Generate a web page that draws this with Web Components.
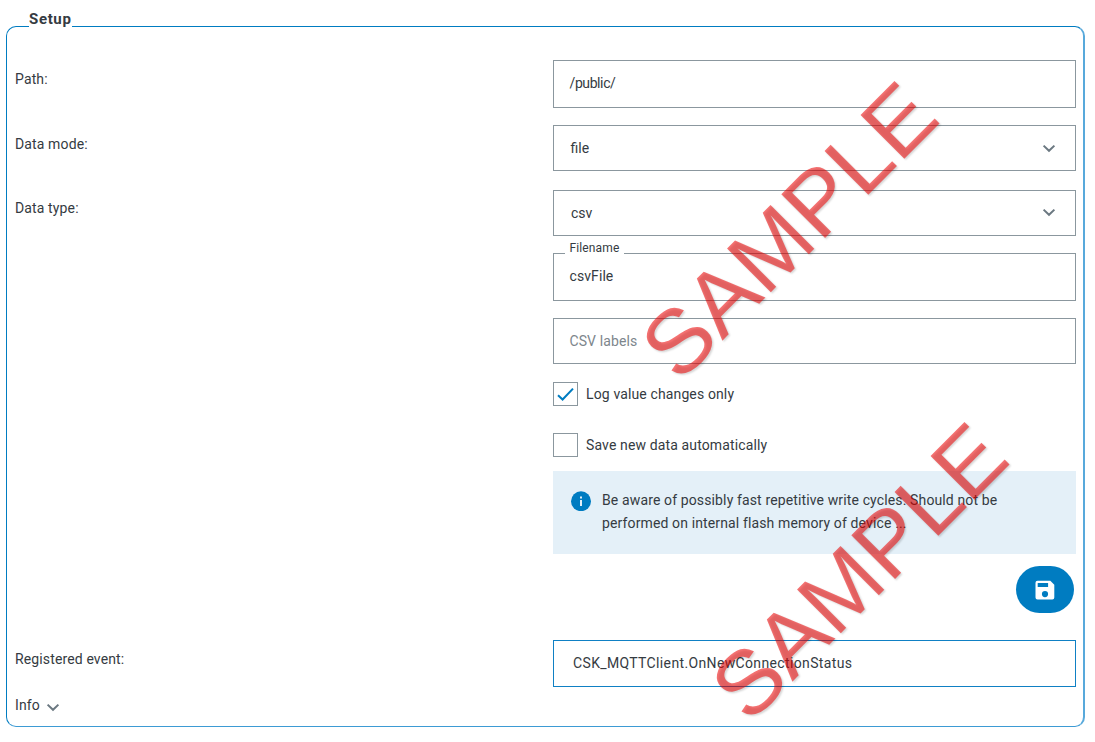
<!DOCTYPE html>
<html lang="en">
<head>
<meta charset="utf-8">
<title>Setup</title>
<style>
body{margin:0;background:#fff;width:1095px;height:742px;overflow:hidden;position:relative;font:14px/22px Roboto,"Liberation Sans",sans-serif;letter-spacing:.13px;color:#353b42}
</style>
</head>
<body>
<setup-panel heading="Setup">
  <form-row label="Path:" style="margin-top:33px;--ly:8px"><text-field style="--h:48px;--ls:-.4px;--ty:-2px;--px:15.5px">/public/</text-field></form-row>
  <form-row label="Data mode:" style="margin-top:17px;--ly:8px"><text-field select style="--px:16.5px">file</text-field></form-row>
  <form-row label="Data type:" style="margin-top:19px;--ly:7px"><text-field select style="--px:17px;--cy:-1px">csv</text-field></form-row>
  <form-row style="margin-top:17px"><text-field caption="Filename" style="--h:48px;--ty:-2px;--px:15.5px;--ls:.08px">csvFile</text-field></form-row>
  <form-row style="margin-top:17px"><text-field style="--fc:#7d868c;--ls:.1px;--px:15.5px">CSV labels</text-field></form-row>
  <form-row style="margin-top:18px"><check-box checked>Log value changes only</check-box></form-row>
  <form-row style="margin-top:27px"><check-box>Save new data automatically</check-box></form-row>
  <form-row style="margin-top:14px"><info-note>Be aware of possibly fast repetitive write cycles. Should not be<br>performed on internal flash memory of device ...</info-note></form-row>
  <form-row style="margin-top:12px"><save-button></save-button></form-row>
  <form-row label="Registered event:" style="margin-top:27px;--ly:8px"><text-field style="--h:47px;--bc:#0f80c4;--px:19px;--ls:.36px">CSK_MQTTClient.OnNewConnectionStatus</text-field></form-row>
  <info-toggle>Info</info-toggle>
</setup-panel>
<water-mark style="left:679px;top:384px">SAMPLE</water-mark>
<water-mark style="left:749px;top:725px">SAMPLE</water-mark>
<script>
const define=(name,html,setup)=>customElements.define(name,class extends HTMLElement{
  connectedCallback(){
    if(this.shadowRoot)return;
    const root=this.attachShadow({mode:"open"});
    const t=document.createElement("template");
    t.innerHTML=html;
    root.append(t.content.cloneNode(true));
    if(setup)setup(this,root);
  }
});
const chevron='<svg class="chev" width="14" height="9" viewBox="0 0 14 9"><path d="M1.6 1.6 7 6.8l5.4-5.2" fill="none" stroke="#6b7881" stroke-width="2"/></svg>';

define("setup-panel",`<style>
:host{display:flow-root;box-sizing:border-box;margin:26px 0 0 6px;width:1079px;height:701px;padding:0 7px 0 8px;border:1px solid #007cc1;border-right:2px solid #58a9db;border-bottom-color:#3d9bd4;border-radius:10px}
h2{float:left;margin:-18px 0 0 14px;height:20px;font:700 15px/20px Roboto,sans-serif;letter-spacing:.65px;background:#fff;width:43px;white-space:nowrap}
.body{clear:both;display:flow-root}
.wrap{margin-top:-2px}
</style><h2></h2><div class="body"><div class="wrap"><slot></slot></div></div>`,(h,r)=>r.querySelector("h2").textContent=h.getAttribute("heading"));

define("form-row",`<style>
:host{display:grid;grid-template-columns:538px 523px}
label{padding-top:var(--ly,0);height:22px}
</style><label></label><div><slot></slot></div>`,(h,r)=>r.querySelector("label").textContent=h.getAttribute("label")||"");

define("text-field",`<style>
:host{display:flex;align-items:center;justify-content:space-between;box-sizing:border-box;height:var(--h,46px);border:1px solid var(--bc,#8b979e);padding:0 19px 0 var(--px,16px);color:var(--fc,#353b42);position:relative}
.v{position:relative;padding-bottom:calc(0px - var(--ty,-1px));letter-spacing:var(--ls,0)}
.cap{position:absolute;left:11px;top:-13px;font-size:12px;line-height:15px;padding:0 5px 0 4.5px;background:#fff}
.cap:empty,:host(:not([select])) .chev{display:none}
.chev{margin-top:var(--cy,1px)}
</style><span class="cap"></span><span class="v"><slot></slot></span>${chevron}`,(h,r)=>r.querySelector(".cap").textContent=h.getAttribute("caption")||"");

define("check-box",`<style>
:host{display:flex;align-items:center;height:24px;gap:8px}
.box{box-sizing:border-box;width:25px;height:24px;border:1px solid #8b979e;display:flex;align-items:center;justify-content:center}
:host(:not([checked])) svg{display:none}
</style><span class="box"><svg width="19" height="16" viewBox="0 0 19 16"><path d="M2 9.2 6.6 13.5 17 2.6" fill="none" stroke="#007cc1" stroke-width="2"/></svg></span><span><slot></slot></span>`);

define("info-note",`<style>
:host{display:flex;box-sizing:border-box;height:83px;background:#e4f0f8;padding:18px 0 0 18px}
svg{margin:2px 11px 0 0;flex:none}
.t{line-height:23px;white-space:nowrap}
</style><svg width="20" height="20" viewBox="0 0 20 20"><circle cx="10" cy="10.2" r="10" fill="#007cc1"/><path d="M9 5.4h2v2H9zM9 9h2v6H9z" fill="#e4f0f8"/></svg><span class="t"><slot></slot></span>`);

define("save-button",`<style>
:host{display:flex;justify-content:flex-end;padding-right:2px}
button{width:58px;height:47px;border:0;border-radius:24px;background:#007cc1;padding:0;display:flex;align-items:center;justify-content:center}
</style><button aria-label="Save"><svg width="20" height="20" viewBox="0 0 20 20" style="margin-right:1px;margin-top:1px"><path fill="#fff" fill-rule="evenodd" d="M2.5.8h12.8l4 4v12.6a2 2 0 0 1-2 2H2.5a2 2 0 0 1-2-2V2.8a2 2 0 0 1 2-2zM2.7 2.9v4h10.4v-4zM10 11a3.1 3.1 0 1 0 0 6.2 3.1 3.1 0 0 0 0-6.2z"/></svg></button>`);

define("info-toggle",`<style>
:host{display:flex;align-items:center;gap:6px;margin-top:7px;height:22px}
.chev{margin-top:5px}
</style><span><slot></slot></span>${chevron}`);

define("water-mark",`<style>
:host{position:absolute;width:0;height:0;pointer-events:none;letter-spacing:0}
span{position:absolute;left:0;bottom:0;font:90px/1 "Liberation Sans",Arial,sans-serif;font-kerning:none;line-height:0;height:0;white-space:nowrap;color:rgba(236,0,0,.55);text-shadow:0 2px 2px rgba(0,0,0,.16);transform-origin:0 0;transform:rotate(-45deg) scaleX(1.02) translateY(-31px)}
</style><span><slot></slot></span>`);
</script>
</body>
</html>
